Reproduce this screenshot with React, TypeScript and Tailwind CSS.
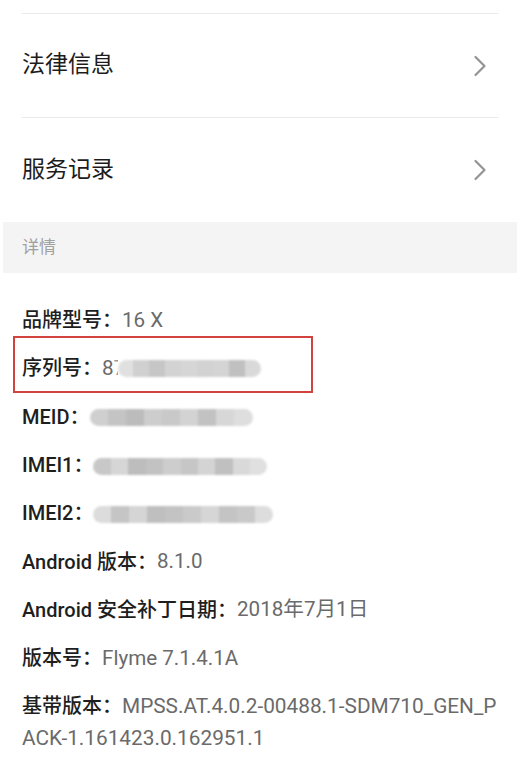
import React from "react";

const font = { fontFamily: 'Roboto, "Noto Sans CJK SC", sans-serif' };

function Chevron() {
  return (
    <svg width="14" height="22" viewBox="0 0 14 22" className="text-[#949494]">
      <path d="M2.5 2 L11.5 11 L2.5 20" fill="none" stroke="currentColor" strokeWidth="2.2" strokeLinecap="round" strokeLinejoin="round" />
    </svg>
  );
}

function Blur({ shades, width }: { shades: string[]; width: number }) {
  return (
    <span className="inline-flex h-[17px] overflow-hidden rounded-full blur-[1px] align-middle" style={{ width }}>
      {shades.map((s, i) => (
        <span key={i} className="h-full flex-1" style={{ background: s }} />
      ))}
    </span>
  );
}

function NavRow({ title, h }: { title: string; h: string }) {
  return (
    <div className={`flex items-center justify-between pl-[22px] pr-[33px] ${h}`}>
      <span className="text-[23px] text-[#1c1c1c]">{title}</span>
      <Chevron />
    </div>
  );
}

function Detail({ label, children }: { label: string; children: React.ReactNode }) {
  return (
    <div className="flex h-[48.3px] items-center pl-[22px] text-[20px]">
      <span className="font-medium text-[#1e1e1e]">{label}：</span>
      <span className="text-[20.6px] text-[#6a6a6a]">{children}</span>
    </div>
  );
}

export default function App() {
  const a = ["#cfcfcf", "#c4c4c4", "#bcbcbc", "#cdcdcd", "#c9c9c9", "#d3d3d3", "#c2c2c2", "#d7d7d7", "#dedede"];
  const b = ["#c8c8c8", "#d6d6d6", "#bdbdbd", "#c2c2c2", "#cdcdcd", "#c6c6c6", "#d4d4d4", "#c0c0c0", "#d9d9d9", "#e0e0e0"];
  return (
    <div className="min-h-[773px] w-[520px] overflow-hidden bg-white" style={font}>
      <div className="pt-[13px]">
        <div className="mx-[21px] h-px bg-[#ececec]" />
        <NavRow title="法律信息" h="h-[103px]" />
        <div className="mx-[21px] h-px bg-[#ececec]" />
        <NavRow title="服务记录" h="h-[104px]" />
      </div>
      <div className="mx-[3px] flex h-[51px] items-center bg-[#f4f4f4] pl-[19px] text-[17px] text-[#a0a0a0]">详情</div>
      <div className="pt-[23px]">
        <Detail label="品牌型号">16 X</Detail>
        <div className="relative">
          <div className="pointer-events-none absolute left-[13px] top-[-8px] h-[57px] w-[300px] border-2 border-[#d2433f]" />
          <Detail label="序列号">
            <span className="inline-flex items-center">
              8<span className="inline-block w-[4px] overflow-hidden text-[#9a9a9a]">7</span>
              <Blur width={143} shades={["#e0e0e0", "#d0d0d0", "#c6c6c6", "#d3d3d3", "#d6d6d6", "#d2d2d2", "#d4d4d4", "#c0c0c0", "#d9d9d9"]} />
            </span>
          </Detail>
        </div>
        <Detail label="MEID">
          <Blur width={163} shades={a} />
        </Detail>
        <Detail label="IMEI1">
          <Blur width={174} shades={b} />
        </Detail>
        <Detail label="IMEI2">
          <Blur width={180} shades={["#dcdcdc", "#c5c5c5", "#d5d5d5", "#bfbfbf", "#c3c3c3", "#cacaca", "#d6d6d6", "#c4c4c4", "#c9c9c9", "#dddddd"]} />
        </Detail>
        <Detail label="Android 版本">8.1.0</Detail>
        <Detail label="Android 安全补丁日期">2018年7月1日</Detail>
        <Detail label="版本号">Flyme 7.1.4.1A</Detail>
        <div className="pl-[22px] pt-[8px] text-[20px] leading-[32px]">
          <span className="font-medium text-[#1e1e1e]">基带版本：</span>
          <span className="text-[20.8px] text-[#6a6a6a]">
            MPSS.AT.4.0.2-00488.1-SDM710_GEN_P
            <br />
            ACK-1.161423.0.162951.1
          </span>
        </div>
      </div>
    </div>
  );
}
